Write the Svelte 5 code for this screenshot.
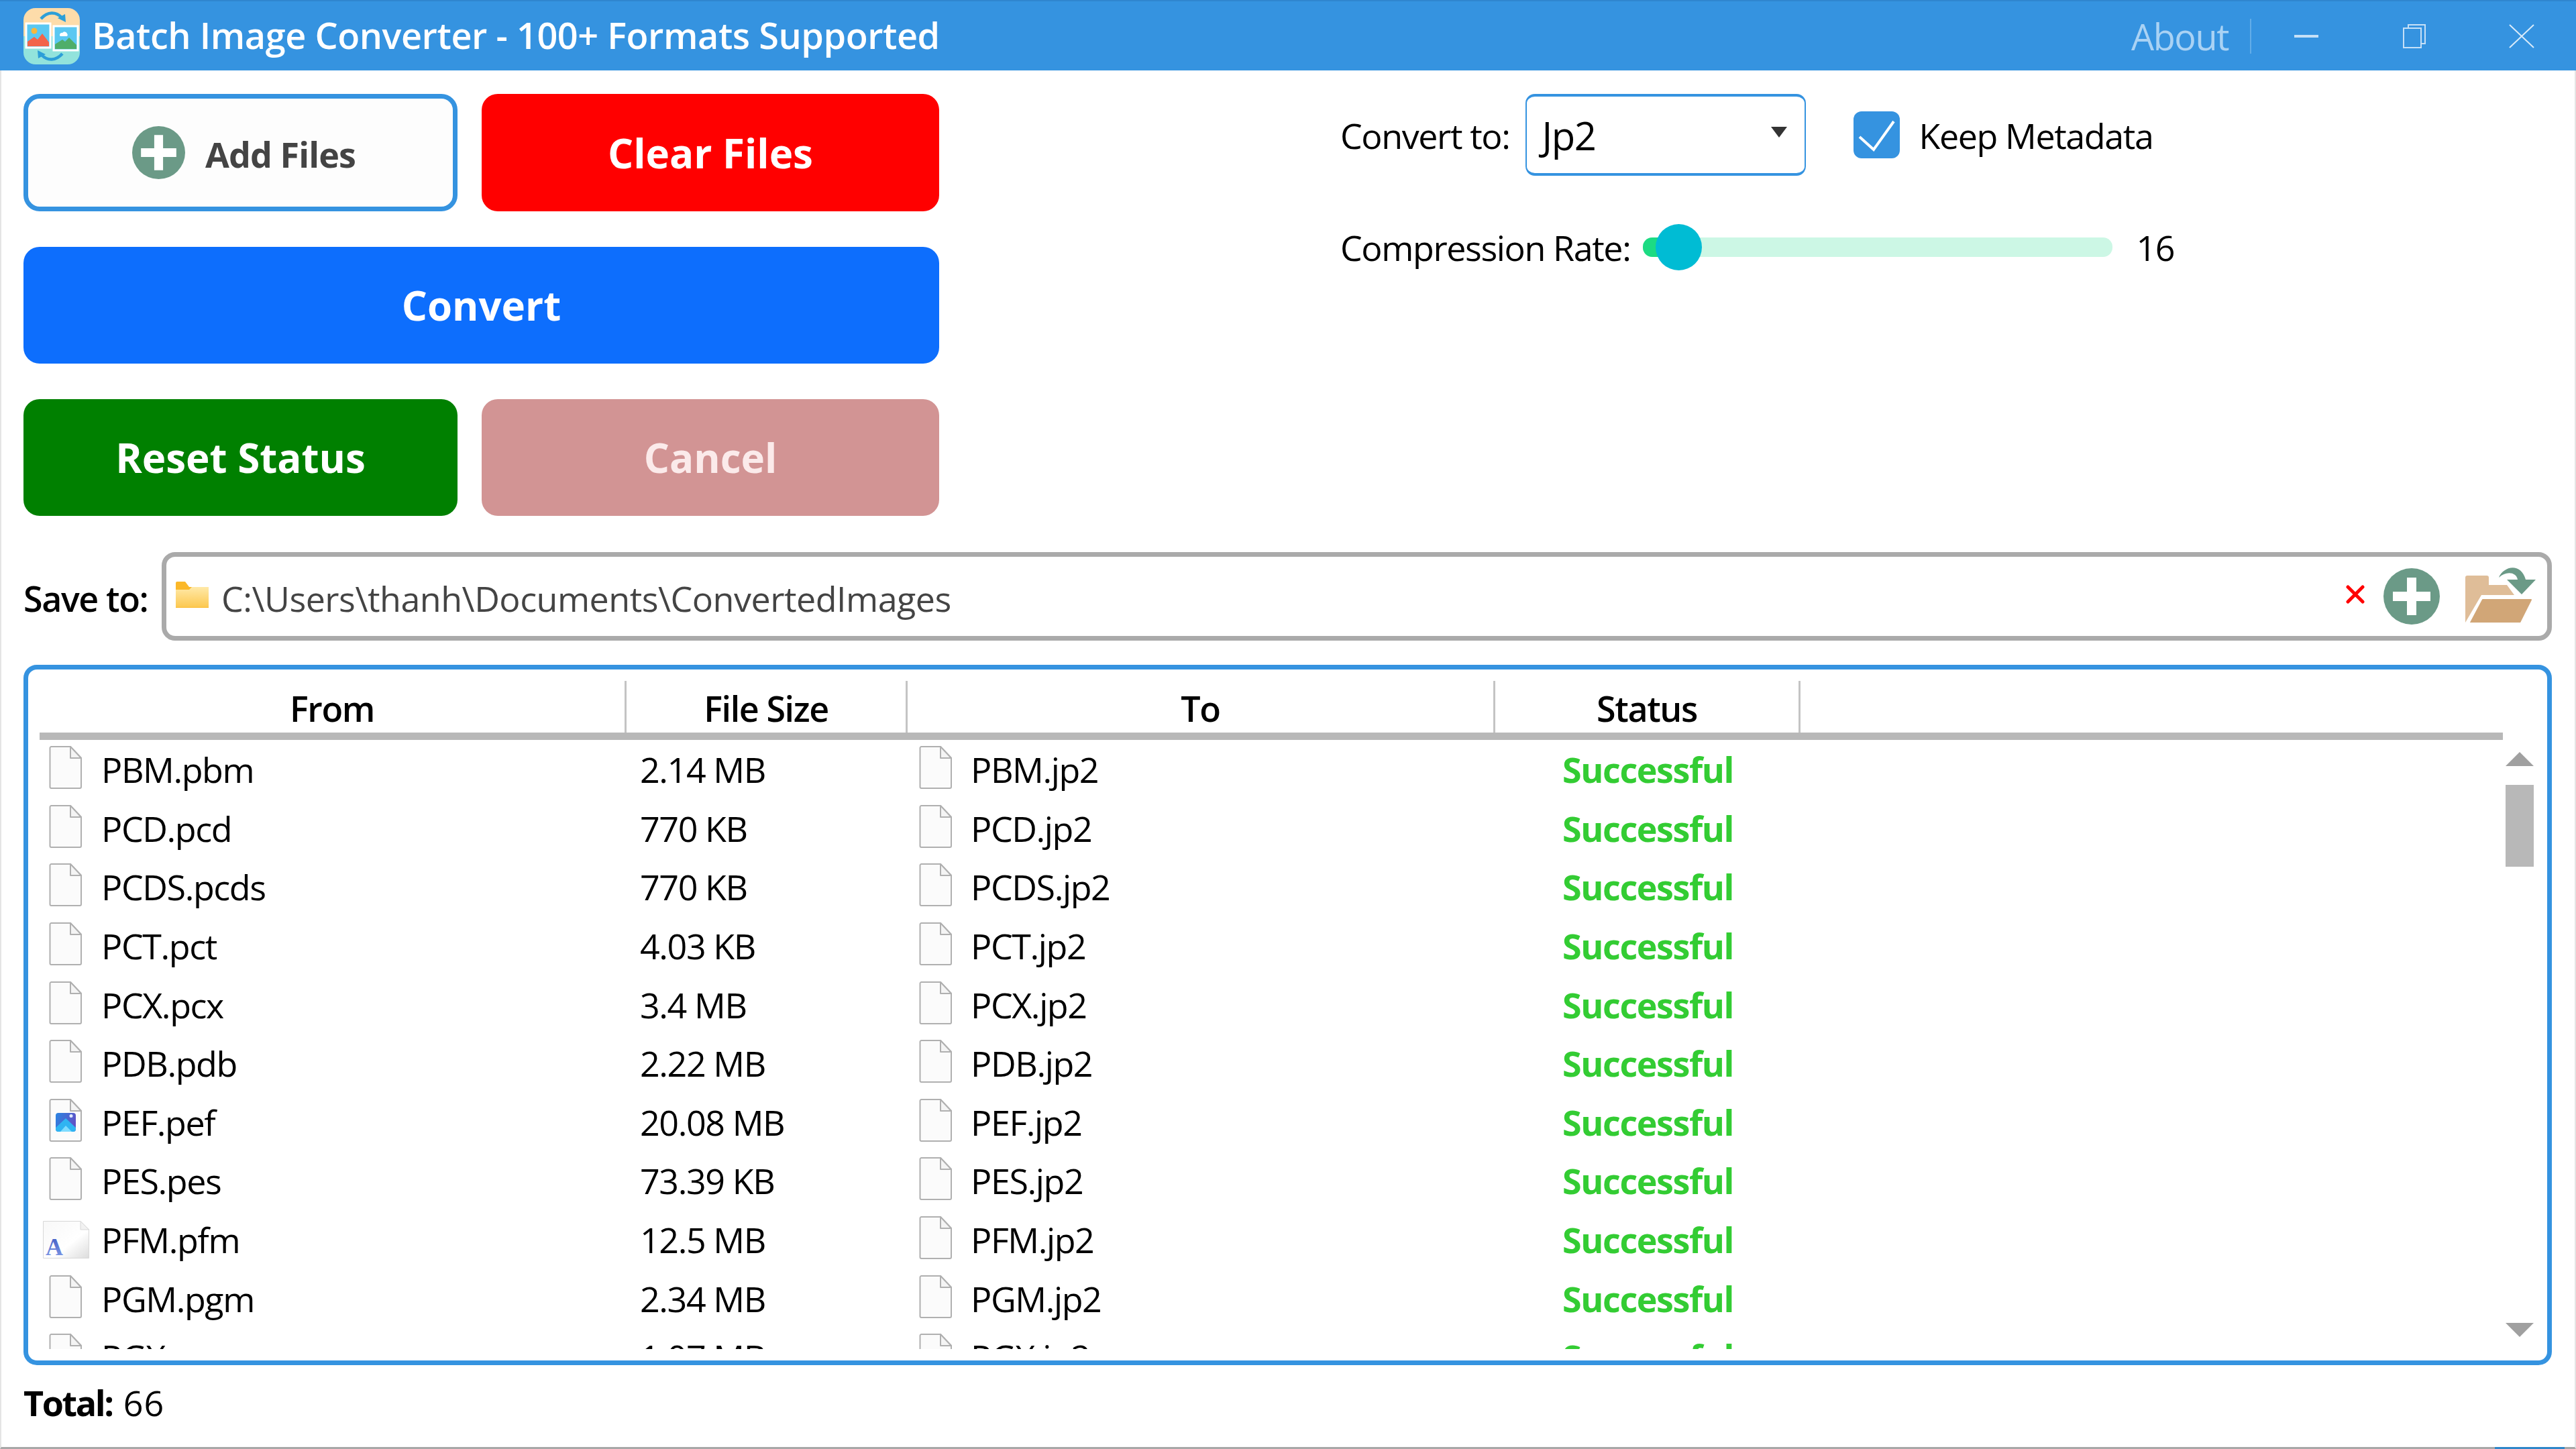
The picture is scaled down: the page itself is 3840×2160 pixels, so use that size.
<script>
  // one row per converted file; icon picks the shell-style thumbnail in the From column
  const rows = [
    { name: 'PBM', size: '2.14 MB' },
    { name: 'PCD', size: '770 KB' },
    { name: 'PCDS', size: '770 KB' },
    { name: 'PCT', size: '4.03 KB' },
    { name: 'PCX', size: '3.4 MB' },
    { name: 'PDB', size: '2.22 MB' },
    { name: 'PEF', size: '20.08 MB', icon: 'image' },
    { name: 'PES', size: '73.39 KB' },
    { name: 'PFM', size: '12.5 MB', icon: 'font' },
    { name: 'PGM', size: '2.34 MB' },
    { name: 'PGX', size: '1.07 MB' },
  ];
</script>

{#snippet blank(kind)}
  <svg class="doc" viewBox="0 0 49 64">
    <path d="M1.5 3a2 2 0 0 1 2-2H32L48 18V61a2 2 0 0 1-2 2H3.5a2 2 0 0 1-2-2Z" fill="#fbfbfb" stroke="#b0b0b0" stroke-width="2" />
    <path d="M32 1V18H48Z" fill="#f4f4f4" stroke="#b0b0b0" stroke-width="2" stroke-linejoin="round" />
    {#if kind === 'image'}
      <defs>
        <linearGradient id="pic-g" x1="0" y1="0" x2="1" y2="0.4">
          <stop offset="0" stop-color="#2a86e2" />
          <stop offset="1" stop-color="#5f52c6" />
        </linearGradient>
      </defs>
      <rect x="10" y="21" width="30" height="28" rx="4" fill="url(#pic-g)" />
      <path d="M10 43L25 29L40 43V45a4 4 0 0 1-4 4H14a4 4 0 0 1-4-4Z" fill="#2fb4f2" />
      <path d="M17 49L25 40L34 49Z" fill="#7fdcff" />
      <circle cx="33" cy="25.5" r="2.5" fill="#dfe8ff" />
    {/if}
  </svg>
{/snippet}

{#snippet plus(cls)}
  <svg class={cls} viewBox="0 0 84 84">
    <circle cx="42" cy="42" r="42" fill="#6b9a87" />
    <path d="M35 14H49V35H70V49H49V70H35V49H14V35H35Z" fill="#fff" />
  </svg>
{/snippet}

<div class="app">
  <header class="titlebar">
    <svg class="logo" viewBox="0 0 84 84">
      <defs>
        <clipPath id="logo-clip"><rect width="84" height="84" rx="18" /></clipPath>
      </defs>
      <g clip-path="url(#logo-clip)">
        <rect width="84" height="42" fill="#fddcaa" />
        <rect y="42" width="84" height="42" fill="#92e3dc" />
      </g>
      <path d="M26 16C36 5 48 5 57 14" fill="none" stroke="#2d9fd8" stroke-width="4.5" />
      <path d="M51 15L63 21L62 9Z" fill="#2d9fd8" />
      <path d="M58 68C48 79 36 79 27 70" fill="none" stroke="#2d9fd8" stroke-width="4.5" />
      <path d="M33 69L21 63L22 75Z" fill="#2d9fd8" />
      <rect x="4" y="23" width="36" height="36" fill="#5ac8f2" stroke="#fff" stroke-width="3" />
      <circle cx="16" cy="34" r="4.5" fill="#f6b73c" />
      <path d="M6 57V50L16 43L21 47L28 38L38 51V57Z" fill="#f2644a" />
      <rect x="45" y="27" width="36" height="36" fill="#5ac8f2" stroke="#fff" stroke-width="3" />
      <path d="M54 40a3 3 0 0 1 4-3a4 4 0 0 1 7 1a3 3 0 0 1 0 4H55a2 2 0 0 1-1-2Z" fill="#fff" />
      <path d="M47 61V54L58 47L62 50L68 44L79 55V61Z" fill="#4fae6a" />
    </svg>
    <span class="app-title">Batch Image Converter - 100+ Formats Supported</span>
    <span class="about">About</span>
    <span class="bar-sep"></span>
    <svg class="winbtn min" viewBox="0 0 36 4"><rect width="36" height="4" fill="#c6e0f7" /></svg>
    <svg class="winbtn restore" viewBox="0 0 34 36">
      <path d="M8 6V1H33V29H27" fill="none" stroke="#c6e0f7" stroke-width="2" />
      <rect x="1" y="6" width="26" height="29" fill="none" stroke="#c6e0f7" stroke-width="2" />
    </svg>
    <svg class="winbtn close" viewBox="0 0 38 36">
      <path d="M1 1L37 35M37 1L1 35" stroke="#d9ebfa" stroke-width="2" />
    </svg>
  </header>

  <main class="content">
    <section class="top">
      <div class="actions">
        <button class="btn outline">{@render plus('add-icon')}<span>Add Files</span></button>
        <button class="btn red">Clear Files</button>
        <button class="btn blue wide">Convert</button>
        <button class="btn green">Reset Status</button>
        <button class="btn muted">Cancel</button>
      </div>
      <div class="options">
        <div class="opt-row first">
          <label class="label" for="fmt">Convert to:</label>
          <div class="select" id="fmt">
            <span>Jp2</span>
            <i class="caret"></i>
          </div>
          <span class="check">
            <svg viewBox="0 0 69 70">
              <path d="M9 38L30 57L60 15" fill="none" stroke="#fff" stroke-width="4" />
            </svg>
          </span>
          <span class="label">Keep Metadata</span>
        </div>
        <div class="opt-row second">
          <span class="label">Compression Rate:</span>
          <div class="slider">
            <div class="fill"></div>
            <div class="thumb"></div>
          </div>
          <span class="value">16</span>
        </div>
      </div>
    </section>

    <section class="save">
      <b class="save-label">Save to:</b>
      <div class="path">
        <svg class="folder" viewBox="0 0 49 39">
          <defs>
            <linearGradient id="folder-g" x1="0" y1="0" x2="0" y2="1">
              <stop offset="0" stop-color="#ffe9a8" />
              <stop offset="1" stop-color="#fcc952" />
            </linearGradient>
          </defs>
          <path d="M0 2a2 2 0 0 1 2-2H14L20 8H49V39H0Z" fill="#fbb829" />
          <path d="M0 12L20 12L24 8H49V38H0Z" fill="url(#folder-g)" />
        </svg>
        <span class="path-text">C:\Users\thanh\Documents\ConvertedImages</span>
        <svg class="clear" viewBox="0 0 28 28">
          <path d="M3 3L25 25M25 3L3 25" stroke="#f00" stroke-width="5" stroke-linecap="round" />
        </svg>
        {@render plus('path-add')}
        <svg class="open" viewBox="0 0 105 85">
          <path d="M0 18a3 3 0 0 1 3-3H32a3 3 0 0 1 3 3V29H62L73 44H24L0 85Z" fill="#dfbd98" />
          <path d="M26 51H98L81 85H8Z" fill="#d1a677" stroke="#d1a677" stroke-width="2" stroke-linejoin="round" />
          <path d="M50 18C56 2 82 -6 90 21H105L84 43L62 21H78C76 9 60 8 50 18Z" fill="#6b9a87" />
        </svg>
      </div>
    </section>

    <section class="table">
      <div class="grid-wrap">
        <div class="thead">
          <div class="th">From</div>
          <div class="th">File Size</div>
          <div class="th">To</div>
          <div class="th">Status</div>
        </div>
        <div class="tbody">
          {#each rows as r}
            <div class="tr">
              <div class="td from">
                <span class="icon-slot">
                  {#if r.icon === 'font'}
                    <svg class="doc font" viewBox="0 0 69 56">
                      <defs>
                        <linearGradient id="font-g" x1="0" y1="0" x2="1" y2="1">
                          <stop offset="0" stop-color="#f8f8f8" />
                          <stop offset="0.6" stop-color="#ffffff" />
                          <stop offset="1" stop-color="#dcdcdc" />
                        </linearGradient>
                        <linearGradient id="font-a" x1="0" y1="0" x2="0" y2="1">
                          <stop offset="0" stop-color="#3a56c0" />
                          <stop offset="1" stop-color="#86a0ea" />
                        </linearGradient>
                      </defs>
                      <path d="M.5 .5H56L68.5 13V55.5H.5Z" fill="url(#font-g)" stroke="#d8d8d8" />
                      <path d="M56 .5V13H68.5Z" fill="#f2f2f2" stroke="#d8d8d8" />
                      <text x="4" y="51" class="font-a" fill="url(#font-a)">A</text>
                    </svg>
                  {:else}
                    {@render blank(r.icon)}
                  {/if}
                </span>
                <span class="name">{r.name}.{r.name.toLowerCase()}</span>
              </div>
              <div class="td size">{r.size}</div>
              <div class="td to">
                {@render blank()}
                <span>{r.name}.jp2</span>
              </div>
              <div class="td status">Successful</div>
            </div>
          {/each}
        </div>
      </div>
      <div class="scroll">
        <i class="arrow up"></i>
        <div class="track"><div class="scroll-thumb"></div></div>
        <i class="arrow down"></i>
      </div>
    </section>

    <footer class="total"><b>Total:</b> <span class="count">66</span></footer>
    <div class="taskbar-hint"></div>
  </main>
</div>

<style>
  :global(body) {
    margin: 0;
    background: #fff;
  }
  .app {
    width: 3840px;
    height: 2160px;
    display: flex;
    flex-direction: column;
    overflow: hidden;
    font-family: 'Open Sans', 'Noto Sans', sans-serif;
    font-size: 52px;
    letter-spacing: -1.4px;
    color: #000;
    background: #fff;
  }

  .titlebar {
    height: 105px;
    flex: none;
    display: flex;
    align-items: center;
    padding: 0 62px 0 35px;
    box-sizing: border-box;
    background: #3593e0;
    border-top: 2px solid #2f86cf;
  }
  .logo {
    width: 84px;
    height: 84px;
    margin-right: 18px;
  }
  .app-title {
    color: #fff;
    font-size: 54px;
    font-weight: 600;
    letter-spacing: -0.45px;
    white-space: nowrap;
    flex: 1;
    margin-bottom: 4px;
  }
  .about {
    color: #a9d2f4;
    font-size: 54px;
    margin-right: 32px;
  }
  .bar-sep {
    width: 2px;
    height: 52px;
    background: #62ade8;
    margin-right: 64px;
  }
  .winbtn {
    display: block;
    flex: none;
  }
  .min {
    width: 36px;
    height: 4px;
    margin-right: 126px;
  }
  .restore {
    width: 34px;
    height: 36px;
    margin-right: 124px;
  }
  .close {
    width: 38px;
    height: 36px;
  }

  .content {
    flex: 1;
    display: flex;
    flex-direction: column;
    padding: 35px 34px 0 35px;
    min-height: 0;
    position: relative;
    border-left: 2px solid #e4e4e4;
    border-right: 2px solid #e4e4e4;
    border-bottom: 3px solid #a8a8a8;
    box-sizing: border-box;
  }
  .taskbar-hint {
    position: absolute;
    right: 15px;
    bottom: -3px;
    width: 104px;
    height: 3px;
    background: #2f86c9;
  }

  .top {
    display: flex;
    height: 629px;
    margin-left: -2px;
  }
  .actions {
    width: 1365px;
    display: grid;
    grid-template-columns: 647px 682px;
    grid-template-rows: 175px 174px 174px;
    column-gap: 36px;
    row-gap: 53px;
    align-content: start;
  }
  .btn {
    border: none;
    border-radius: 24px;
    font: inherit;
    font-size: 60px;
    font-weight: 700;
    letter-spacing: 0;
    color: #fff;
    display: flex;
    align-items: center;
    justify-content: center;
    padding: 0;
  }
  .outline {
    background: #fdfdfd;
    border: 7px solid #3593e0;
    box-sizing: border-box;
    color: #444;
    font-size: 52px;
    letter-spacing: -0.9px;
    gap: 30px;
    padding-left: 10px;
  }
  .outline span {
    margin-top: 3px;
  }
  .add-icon {
    width: 79px;
    height: 79px;
  }
  .red {
    background: #f00;
  }
  .blue {
    background: #0d6efd;
  }
  .wide {
    grid-column: 1 / 3;
  }
  .green {
    background: #008000;
  }
  .muted {
    background: #d29494;
    color: #fbeaea;
  }

  .options {
    margin-left: 598px;
    flex: 1;
  }
  .opt-row {
    display: flex;
    align-items: center;
  }
  .opt-row.first {
    height: 122px;
  }
  .opt-row.second {
    height: 70px;
    margin-top: 71px;
  }
  .label {
    white-space: nowrap;
  }
  .select {
    width: 418px;
    height: 122px;
    box-sizing: border-box;
    margin-left: 24px;
    border: 2px solid #3593e0;
    border-top-width: 4px;
    border-bottom-width: 4px;
    border-radius: 14px;
    display: flex;
    align-items: center;
    justify-content: space-between;
    padding: 0 26px 0 22px;
    font-size: 58px;
  }
  .caret {
    width: 0;
    height: 0;
    border-left: 12px solid transparent;
    border-right: 12px solid transparent;
    border-top: 16px solid #333;
    margin-bottom: 8px;
  }
  .check {
    width: 69px;
    height: 70px;
    margin: 0 28px 0 71px;
    border-radius: 12px;
    background: #3593e0;
    flex: none;
  }
  .check svg {
    display: block;
  }
  .slider {
    width: 700px;
    height: 29px;
    margin-left: 19px;
    border-radius: 14px;
    background: #ccf7e5;
    position: relative;
  }
  .fill {
    width: 40px;
    height: 100%;
    border-radius: 14px 0 0 14px;
    background: #1cdb83;
  }
  .thumb {
    position: absolute;
    left: 19px;
    top: -20px;
    width: 69px;
    height: 69px;
    border-radius: 50%;
    background: #00bcd4;
  }
  .value {
    margin-left: 35px;
  }

  .save {
    display: flex;
    align-items: center;
    margin-left: -2px;
    margin-top: 54px;
    height: 132px;
    flex: none;
  }
  .save-label {
    font-weight: 600;
    width: 206px;
    flex: none;
    margin-top: 4px;
  }
  .path {
    flex: 1;
    height: 132px;
    box-sizing: border-box;
    border: 7px solid #aaa;
    border-radius: 20px;
    display: flex;
    align-items: center;
    padding: 0 17px 0 14px;
    color: #444;
  }
  .folder {
    width: 49px;
    height: 39px;
    margin: 0 19px 6px 0;
    flex: none;
  }
  .path-text {
    flex: 1;
    margin-top: 4px;
    letter-spacing: -0.5px;
  }
  .clear {
    width: 28px;
    height: 28px;
    margin: 0 28px 6px 0;
  }
  .path-add {
    width: 84px;
    height: 84px;
    margin-right: 38px;
  }
  .open {
    width: 105px;
    height: 85px;
    margin-bottom: 8px;
  }

  .table {
    margin: 36px 0 0 -2px;
    height: 1044px;
    flex: none;
    box-sizing: border-box;
    border: 7px solid #3593e0;
    border-radius: 20px;
    display: flex;
    padding: 17px 20px 0 17px;
  }
  .grid-wrap {
    width: 3672px;
    flex: none;
    height: 996px;
    display: flex;
    flex-direction: column;
    overflow: hidden;
  }
  .thead,
  .tr {
    display: grid;
    grid-template-columns: 875px 419px 876px 455px;
  }
  .thead {
    height: 88px;
    flex: none;
    box-sizing: border-box;
    border-bottom: 11px solid #b8b8b8;
  }
  .th {
    height: 77px;
    display: flex;
    align-items: center;
    justify-content: center;
    font-weight: 600;
    box-sizing: border-box;
    border-right: 3px solid #c4c4c4;
    padding-top: 4px;
  }
  .tbody {
    flex: 1;
    overflow: hidden;
  }
  .tr {
    height: 87.6px;
  }
  .td {
    display: flex;
    align-items: center;
    white-space: nowrap;
    min-width: 0;
  }
  .from {
    padding-left: 14px;
  }
  .icon-slot {
    width: 78px;
    flex: none;
    display: flex;
    align-items: center;
  }
  .size {
    padding-left: 20px;
  }
  .to {
    padding-left: 17px;
    gap: 28px;
  }
  .status {
    justify-content: center;
    font-weight: 700;
    color: #33cc33;
  }
  .doc {
    width: 49px;
    height: 64px;
    flex: none;
    margin-bottom: 5px;
  }
  .doc.font {
    width: 69px;
    height: 56px;
    margin: 0 0 0 -9px;
  }
  .font-a {
    font-family: 'Liberation Serif', serif;
    font-weight: 700;
    font-size: 36px;
    letter-spacing: 0;
  }

  .scroll {
    width: 42px;
    margin-left: 4px;
    display: flex;
    flex-direction: column;
    align-items: center;
    padding-top: 106px;
    height: 978px;
    box-sizing: border-box;
    flex: none;
  }
  .arrow {
    width: 0;
    height: 0;
    border-left: 21px solid transparent;
    border-right: 21px solid transparent;
    flex: none;
  }
  .arrow.up {
    border-bottom: 21px solid #a0a0a0;
  }
  .arrow.down {
    border-top: 21px solid #a0a0a0;
  }
  .track {
    flex: 1;
    width: 42px;
    padding-top: 28px;
    box-sizing: border-box;
  }
  .scroll-thumb {
    height: 122px;
    background: #b8b8b8;
  }

  .total {
    margin: 20px 0 0 -2px;
  }
  .total b {
    font-weight: 700;
    letter-spacing: -2.4px;
  }
  .count {
    letter-spacing: 1px;
    margin-left: 4px;
  }
</style>
